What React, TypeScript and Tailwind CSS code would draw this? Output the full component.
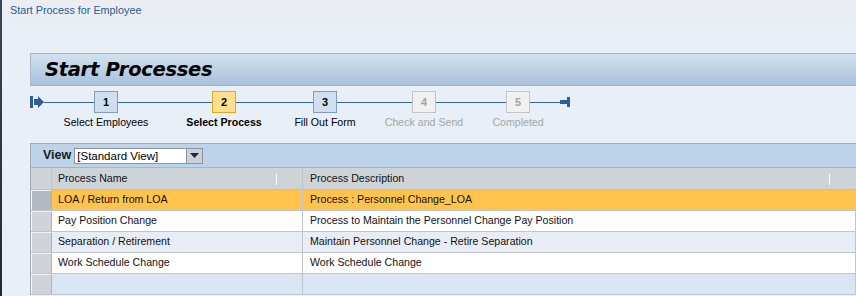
import React from "react";

const steps = [
  { n: "1", label: "Select Employees", state: "done" },
  { n: "2", label: "Select Process", state: "current" },
  { n: "3", label: "Fill Out Form", state: "done" },
  { n: "4", label: "Check and Send", state: "future" },
  { n: "5", label: "Completed", state: "future" },
];

const segs = [50, 94, 77, 75, 70, 30];

const rows = [
  { name: "LOA / Return from LOA", desc: "Process : Personnel Change_LOA", kind: "sel" },
  { name: "Pay Position Change", desc: "Process to Maintain the Personnel Change Pay Position", kind: "white" },
  { name: "Separation / Retirement", desc: "Maintain Personnel Change - Retire Separation", kind: "alt" },
  { name: "Work Schedule Change", desc: "Work Schedule Change", kind: "white" },
  { name: "", desc: "", kind: "empty" },
];

function Seg({ w }: { w: number }) {
  return (
    <div className="h-[22px] flex items-center shrink-0" style={{ width: w }}>
      <div className="h-[1px] w-full bg-[#336699]" />
    </div>
  );
}

function Step({ n, label, state }: { n: string; label: string; state: string }) {
  const box =
    state === "current"
      ? "bg-[#ffe08c] border-[#e3a81e] text-black"
      : state === "done"
      ? "bg-[#cfdff0] border-[#7e9ec0] text-black"
      : "bg-[#f1f1f1] border-[#c4c4c4] text-[#a3a3a3]";
  const lab =
    state === "current"
      ? "font-bold text-black"
      : state === "done"
      ? "text-black"
      : "text-[#a6a6a6]";
  return (
    <div className="w-[24px] shrink-0 flex flex-col items-center">
      <div className={`w-[24px] h-[22px] border flex items-center justify-center text-[11px] font-bold ${box}`}>
        {n}
      </div>
      <div className={`mt-[2px] whitespace-nowrap text-[10.6px] leading-[14px] ${lab}`}>{label}</div>
    </div>
  );
}

export default function App() {
  return (
    <div className="w-[856px] h-[296px] overflow-hidden flex bg-[#e8eff7] font-['Liberation_Sans',Arial,sans-serif]">
      <div className="w-[2px] shrink-0 bg-gradient-to-b from-[#3a4656] to-[#1e2a38]" />
      <div className="flex-1 flex flex-col min-w-0">
        <div className="h-[23px] shrink-0 bg-[#eaeef2] pl-[8px] pt-[4px] text-[10.8px] leading-[13px] text-[#2a5b93]">
          Start Process for Employee
        </div>
        <div className="pl-[28px] pt-[30px] flex flex-col">
          <div className="h-[33px] border-t border-b border-l border-t-[#a5b3c3] border-b-[#9db1c6] border-l-[#a9b9ca] bg-gradient-to-b from-[#d2e1ef] to-[#a9c1da] flex items-center pl-[14px]">
            <span className="font-['DejaVu_Sans',Verdana,sans-serif] font-bold italic text-[19.5px] leading-[24px] text-black tracking-[-0.3px]">
              Start Processes
            </span>
          </div>
          <div className="h-[57px] pt-[5px] flex items-start">
            <div className="h-[22px] flex items-center shrink-0">
              <svg width="14" height="12" viewBox="0 0 14 12">
                <rect x="0" y="0" width="3" height="12" fill="#2c5f94" />
                <path d="M4 3 H8 V0 L14 6 L8 12 V9 H4 Z" fill="#2c5f94" />
              </svg>
            </div>
            <Seg w={segs[0]} />
            {steps.map((s, i) => (
              <React.Fragment key={s.n}>
                <Step {...s} />
                {i < steps.length - 1 && <Seg w={segs[i + 1]} />}
              </React.Fragment>
            ))}
            <Seg w={segs[5]} />
            <div className="h-[22px] flex items-center shrink-0">
              <svg width="11" height="10" viewBox="0 0 11 10">
                <rect x="0" y="3" width="8" height="4" fill="#2c5f94" />
                <rect x="7" y="0" width="3" height="10" fill="#2c5f94" />
              </svg>
            </div>
          </div>
          <div className="border-l border-t border-[#a2adb9] flex flex-col">
            <div className="h-[24px] bg-[#bcd3ea] border-b border-[#a8b5c2] flex items-center pl-[12px] gap-[2px]">
              <span className="font-bold text-[12.5px] text-[#1a1a1a]">View</span>
              <div className="ml-[1px] flex h-[16px] w-[129px] border border-[#8c959f] bg-white">
                <div className="flex-1 text-[11.5px] leading-[14px] pl-[2px] text-black">[Standard View]</div>
                <div className="w-[16px] border-l border-[#8c959f] bg-[#c9d1da] flex items-center justify-center">
                  <svg width="9" height="5" viewBox="0 0 9 5">
                    <path d="M0 0 H9 L4.5 5 Z" fill="#1c2a3a" />
                  </svg>
                </div>
              </div>
            </div>
            <div className="h-[22px] bg-[#ced3d8] border-b border-[#b9bfc6] flex text-[10.6px] text-[#111]">
              <div className="w-[21px] shrink-0 border-r border-[#c0c5cb]" />
              <div className="w-[251px] shrink-0 border-r border-[#bfc4cb] flex items-center pl-[6px] relative">
                Process Name
                <div className="absolute left-[224px] top-[6px] w-[1px] h-[11px] bg-white" />
              </div>
              <div className="flex-1 flex items-center pl-[7px] relative">
                Process Description
                <div className="absolute left-[526px] top-[6px] w-[1px] h-[11px] bg-white" />
              </div>
            </div>
            {rows.map((r, i) => {
              const bg =
                r.kind === "sel"
                  ? "bg-[#ffc34e]"
                  : r.kind === "white"
                  ? "bg-white"
                  : r.kind === "alt"
                  ? "bg-[#e8ecf5]"
                  : "bg-[#d9e5f2]";
              return (
                <div key={i} className="h-[21px] flex border-b border-[#c1c6ce] text-[10.6px] text-[#111]">
                  <div
                    className={`w-[21px] shrink-0 border-l border-t border-r border-l-[#f3f5f7] border-t-[#eef0f3] border-r-[#aeb4bb] ${
                      r.kind === "sel" ? "bg-[#b3b9c1]" : "bg-[#d0d4d9]"
                    }`}
                  />
                  <div className={`w-[251px] shrink-0 border-r border-[#c1c6ce] flex items-center pl-[6px] ${bg}`}>
                    {r.name}
                  </div>
                  <div className={`flex-1 flex items-center pl-[7px] border-r border-[#c1c6ce] ${bg}`}>{r.desc}</div>
                </div>
              );
            })}
          </div>
        </div>
      </div>
    </div>
  );
}
